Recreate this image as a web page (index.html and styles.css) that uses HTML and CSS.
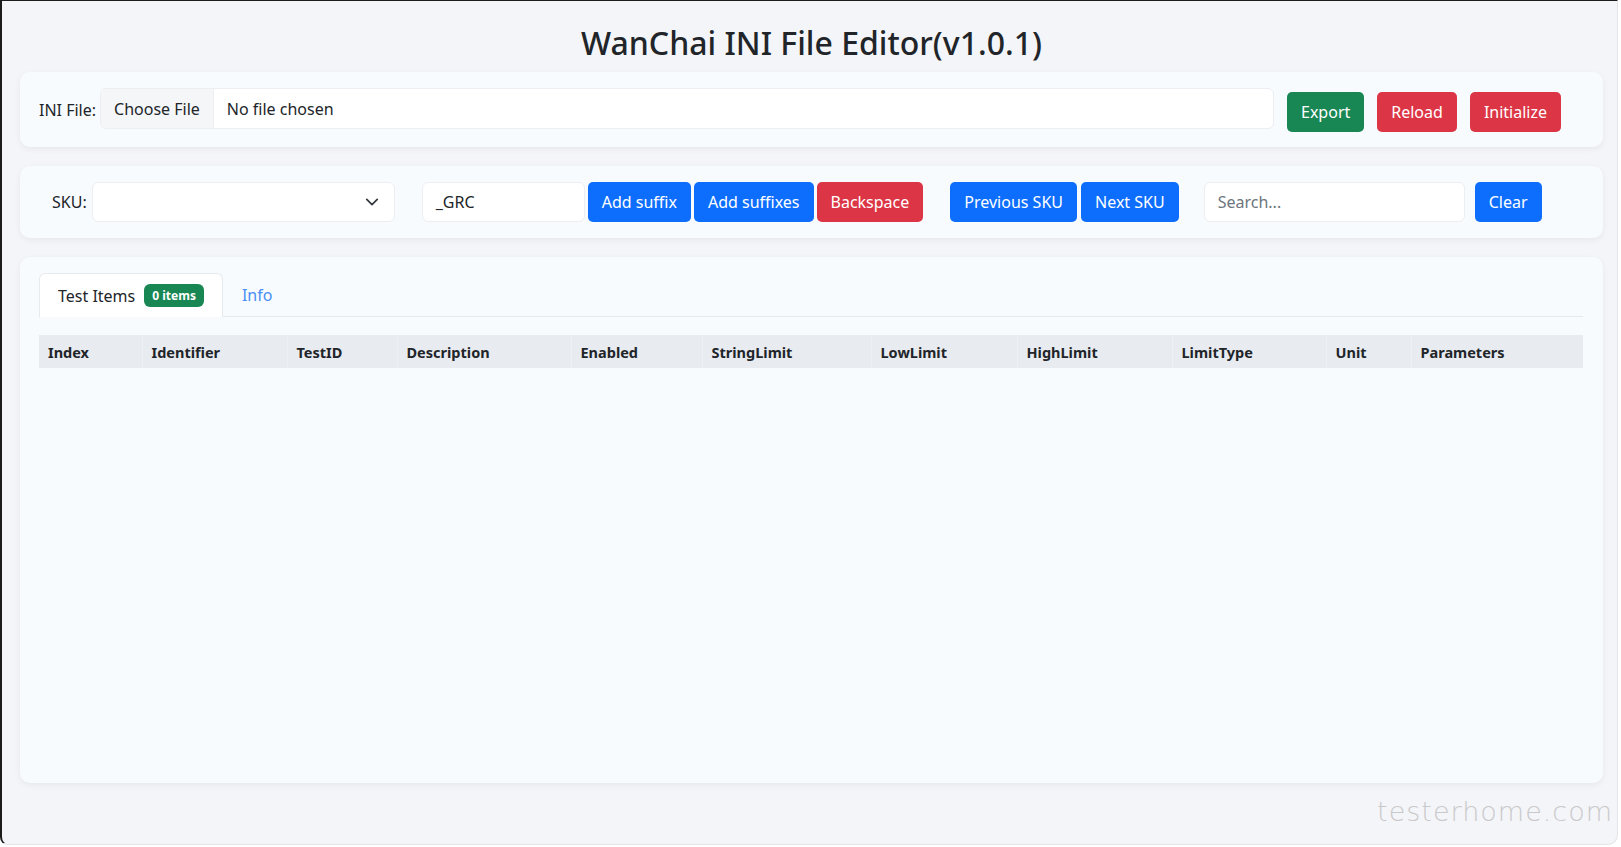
FILE: index.html
```html
<!DOCTYPE html>
<html lang="en">
<head>
    <meta charset="UTF-8">
    <meta name="viewport" content="width=device-width, initial-scale=1.0">
    <title>WanChai INI File Editor</title>
    <link rel="stylesheet" href="styles.css">
</head>
<body>
    <div class="window">
        <h1 class="title">WanChai INI File Editor(v1.0.1)</h1>

        <div class="card file-card">
            <span class="field-label">INI File:</span>
            <div class="file-input">
                <span class="file-btn">Choose File</span>
                <span class="file-name">No file chosen</span>
            </div>
            <div class="file-actions">
                <button class="btn btn-green">Export</button>
                <button class="btn btn-red">Reload</button>
                <button class="btn btn-red">Initialize</button>
            </div>
        </div>

        <div class="card sku-card">
            <span class="field-label">SKU:</span>
            <div class="select">
                <svg width="14" height="14" viewBox="0 0 16 16"><path d="M2 5l6 6 6-6" fill="none" stroke="#343a40" stroke-width="2" stroke-linecap="round" stroke-linejoin="round"/></svg>
            </div>
            <div class="btn-group suffix-group">
                <div class="text-input suffix-input">_GRC</div>
                <button class="btn btn-blue">Add suffix</button>
                <button class="btn btn-blue">Add suffixes</button>
                <button class="btn btn-red">Backspace</button>
            </div>
            <div class="btn-group nav-group">
                <button class="btn btn-blue">Previous SKU</button>
                <button class="btn btn-blue">Next SKU</button>
            </div>
            <div class="text-input search-input placeholder">Search...</div>
            <button class="btn btn-blue clear-btn">Clear</button>
        </div>

        <div class="card table-card">
            <div class="tabs">
                <div class="tab active">Test Items <span class="badge">0 items</span></div>
                <div class="tab">Info</div>
            </div>
            <table class="items">
                <colgroup>
                    <col style="width: 103px">
                    <col style="width: 145px">
                    <col style="width: 110px">
                    <col style="width: 174px">
                    <col style="width: 131px">
                    <col style="width: 169px">
                    <col style="width: 146px">
                    <col style="width: 155px">
                    <col style="width: 154px">
                    <col style="width: 85px">
                    <col>
                </colgroup>
                <thead>
                    <tr>
                        <th>Index</th>
                        <th>Identifier</th>
                        <th>TestID</th>
                        <th>Description</th>
                        <th>Enabled</th>
                        <th>StringLimit</th>
                        <th>LowLimit</th>
                        <th>HighLimit</th>
                        <th>LimitType</th>
                        <th>Unit</th>
                        <th>Parameters</th>
                    </tr>
                </thead>
                <tbody></tbody>
            </table>
        </div>

        <div class="watermark">testerhome.com</div>
    </div>
</body>
</html>
```

FILE: styles.css
```css
html, body {
    margin: 0;
    padding: 0;
    background: #ffffff;
}
body {
    font-family: "Noto Sans", "Open Sans", sans-serif;
    font-size: 16px;
    color: #212529;
}
.window {
    position: relative;
    box-sizing: border-box;
    width: 1618px;
    height: 845px;
    padding: 0 14px 0 18px;
    background: #f4f5f8;
    border-left: 2px solid #1c1c1c;
    border-top: 1px solid #1c1c1c;
    border-right: 1px solid #e2e4e8;
    border-bottom: 1px solid #e2e4e8;
    border-bottom-right-radius: 10px;
    border-bottom-left-radius: 8px;
}
.title {
    margin: 22px 0 9px;
    height: 40px;
    line-height: 40px;
    text-align: center;
    font-size: 32px;
    font-weight: 500;
    color: #212529;
}
.card {
    box-sizing: border-box;
    background: #f8fbfe;
    border-radius: 10px;
    box-shadow: 0 2px 6px rgba(0, 0, 0, 0.06);
    display: flex;
    align-items: center;
}
.field-label {
    font-size: 16px;
    white-space: nowrap;
}

/* file row */
.file-card {
    height: 75px;
    padding: 0 42px 0 19px;
}
.file-card .field-label {
    margin-right: 4px;
}
.file-input {
    flex: 1;
    display: flex;
    height: 39px;
    margin-top: -2px;
    background: #fff;
    border: 1px solid #eceef1;
    border-radius: 6px;
    overflow: hidden;
}
.file-btn {
    display: flex;
    align-items: center;
    padding: 0 13px;
    background: #f5f6f8;
    border-right: 1px solid #eceef1;
    white-space: nowrap;
}
.file-name {
    display: flex;
    align-items: center;
    padding: 0 13px;
}
.file-actions {
    display: flex;
    gap: 13px;
    margin-left: 13px;
    margin-top: 4px;
}

/* buttons */
.btn {
    height: 40px;
    padding: 0 14px;
    border: none;
    border-radius: 5px;
    font-family: inherit;
    font-size: 16px;
    color: #fff;
    cursor: pointer;
    white-space: nowrap;
}
.btn-green {
    background: #198754;
}
.btn-red {
    background: #dc3545;
}
.btn-blue {
    background: #0d6efd;
}

/* sku row */
.sku-card {
    height: 72px;
    margin-top: 19px;
    padding: 0 20px 0 32px;
}
.sku-card .field-label {
    margin-right: 5px;
}
.select {
    box-sizing: border-box;
    width: 303px;
    height: 40px;
    display: flex;
    align-items: center;
    justify-content: flex-end;
    padding-right: 15px;
    background: #fff;
    border: 1px solid #eceef1;
    border-radius: 6px;
}
.btn-group {
    display: flex;
    gap: 3px;
}
.suffix-group {
    margin-left: 27px;
}
.nav-group {
    margin-left: 27px;
    gap: 4px;
}
.text-input {
    box-sizing: border-box;
    height: 40px;
    display: flex;
    align-items: center;
    padding: 0 13px;
    background: #fff;
    border: 1px solid #eceef1;
    border-radius: 6px;
}
.suffix-input {
    width: 163px;
}
.search-input {
    width: 261px;
    margin-left: 25px;
}
.placeholder {
    color: #6c757d;
}
.clear-btn {
    margin-left: 10px;
}

/* table card */
.table-card {
    height: 526px;
    margin-top: 19px;
    padding: 16px 20px 0 19px;
    flex-direction: column;
    align-items: stretch;
}
.tabs {
    display: flex;
    border-bottom: 1px solid #e6e9ed;
}
.tab {
    height: 42px;
    display: flex;
    align-items: center;
    padding: 0 18px;
    color: #4a8ff5;
    border: 1px solid transparent;
    border-bottom: none;
    border-radius: 6px 6px 0 0;
    margin-bottom: -1px;
}
.tab.active {
    color: #212529;
    background: #fff;
    border-color: #e6e9ed;
    height: 43px;
}
.badge {
    margin-left: 9px;
    padding: 3px 8px;
    background: #198754;
    color: #fff;
    font-size: 12px;
    font-weight: 700;
    border-radius: 6px;
}
.items {
    margin-top: 18px;
    width: 100%;
    border-collapse: collapse;
    table-layout: fixed;
}
.items th {
    height: 33px;
    padding: 0 9px;
    background: #e8ebf0;
    border-left: 1px solid #eef0f4;
    text-align: left;
    font-size: 14.5px;
    font-weight: 700;
    color: #212529;
    white-space: nowrap;
}
.items th:first-child {
    border-left: none;
}

.watermark {
    position: absolute;
    right: 4px;
    bottom: 17px;
    font-family: "DejaVu Sans", sans-serif;
    font-size: 27px;
    font-weight: 200;
    letter-spacing: 1px;
    color: #c9c9cb;
}
```
